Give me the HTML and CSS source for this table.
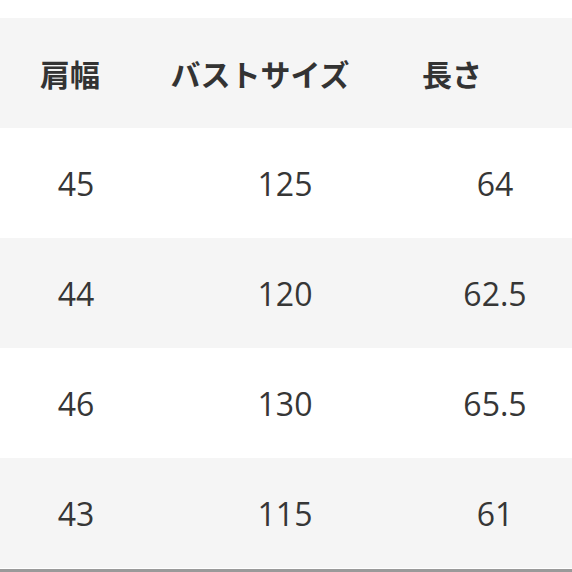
FILE: index.html
```html
<!DOCTYPE html>
<html lang="ja">
<head>
<meta charset="utf-8">
<link rel="stylesheet" href="styles.css">
</head>
<body>
<div class="table">
  <div class="row head">
    <div class="cell">肩幅</div>
    <div class="cell">バストサイズ</div>
    <div class="cell">長さ</div>
  </div>
  <div class="row data">
    <div class="cell">45</div>
    <div class="cell">125</div>
    <div class="cell">64</div>
  </div>
  <div class="row data alt">
    <div class="cell">44</div>
    <div class="cell">120</div>
    <div class="cell">62.5</div>
  </div>
  <div class="row data">
    <div class="cell">46</div>
    <div class="cell">130</div>
    <div class="cell">65.5</div>
  </div>
  <div class="row data alt">
    <div class="cell">43</div>
    <div class="cell">115</div>
    <div class="cell">61</div>
  </div>
  <div class="rule"></div>
</div>
</body>
</html>
```
FILE: styles.css
```css
html, body {
  margin: 0;
  padding: 0;
  background: #ffffff;
}
.table {
  width: 572px;
  padding-top: 18px;
  font-family: "Open Sans", "Noto Sans CJK JP", sans-serif;
  color: #363636;
}
.row {
  display: grid;
  height: 110px;
  align-items: center;
}
.cell {
  text-align: center;
  white-space: nowrap;
}
.head {
  grid-template-columns: 140px 240px 144px 48px;
  background: #f5f5f5;
  font-family: "Noto Sans CJK JP", sans-serif;
  font-weight: 700;
  font-size: 30px;
  color: #333333;
}
.data {
  grid-template-columns: 152px 266px 154px;
  font-size: 32px;
  background: #ffffff;
}
.alt {
  background: #f5f5f5;
}
.rule {
  margin-top: 1px;
  height: 3px;
  background: #9a9a9a;
}
```
